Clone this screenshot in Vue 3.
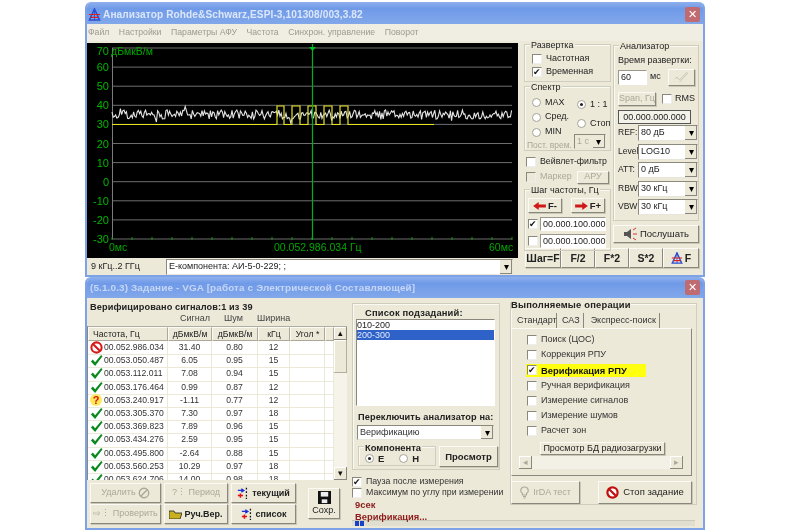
<script setup>
const gridYs = [48, 67.1, 86.2, 105.3, 124.4, 143.5, 162.6, 181.7, 200.8, 219.9, 239]
const labels = ['70', '60', '50', '40', '30', '20', '10', '0', '-10', '-20', '-30']
let seed = 17
const rnd = () => { seed = (seed * 16807) % 2147483647; return seed / 2147483647 }
const pts = []
for (let x = 112; x <= 512; x += 1.2) {
  const spike = rnd() > 0.9 ? (rnd() - 0.5) * 10 : 0
  pts.push(x + ',' + (114.5 + (rnd() - 0.5) * 9 + spike).toFixed(1))
}
const noise = pts.join(' ')
const yellow = '112,124.5 277,124.5 277,106 284,106 284,124.5 292,124.5 292,106 300,106 300,124.5 308,124.5 308,106 316,106 316,124.5 324,124.5 324,106 332,106 332,124.5 340,124.5 340,106 348,106 348,124.5 434,124.5'
const ticks = []
for (let x = 112; x <= 512; x += 20) ticks.push(x)
const rows = [
  ['no', '00.052.986.034', '31.40', '0.80', '12'],
  ['ok', '00.053.050.487', '6.05', '0.95', '15'],
  ['ok', '00.053.112.011', '7.08', '0.94', '15'],
  ['ok', '00.053.176.464', '0.99', '0.87', '12'],
  ['q', '00.053.240.917', '-1.11', '0.77', '12'],
  ['ok', '00.053.305.370', '7.30', '0.97', '18'],
  ['ok', '00.053.369.823', '7.89', '0.96', '15'],
  ['ok', '00.053.434.276', '2.59', '0.95', '15'],
  ['ok', '00.053.495.800', '-2.64', '0.88', '15'],
  ['ok', '00.053.560.253', '10.29', '0.97', '18'],
  ['ok', '00.053.624.706', '14.00', '0.98', '18'],
]
const analyzerSelects = [
  ['REF:', '80 дБ'], ['Level', 'LOG10'], ['ATT:', '0 дБ'], ['RBW:', '30 кГц'], ['VBW:', '30 кГц'],
]
const menu = ['Файл', 'Настройки', 'Параметры АФУ', 'Частота', 'Синхрон. управление', 'Поворот']
const ops = ['Поиск (ЦОС)', 'Коррекция РПУ', 'Верификация РПУ', 'Ручная верификация', 'Измерение сигналов', 'Измерение шумов', 'Расчет зон']
</script>

<template>
  <div class="desk">
    <svg width="0" height="0" class="defs">
      <symbol id="i-ok" viewBox="0 0 14 14"><path d="M1 8 L3 6 L5.5 9 L12 1 L13.5 2.5 L5.5 13 Z" fill="#0a8a1e" /></symbol>
      <symbol id="i-no" viewBox="0 0 14 14"><circle cx="7" cy="7" r="5.5" fill="#fff" stroke="#d81818" stroke-width="2.2" /><path d="M3.2 3.2 L10.8 10.8" stroke="#d81818" stroke-width="2.2" /></symbol>
      <symbol id="i-ant" viewBox="0 0 14 14"><path d="M7 1 L1.5 13 H12.5 Z" fill="none" stroke="#2a4fd0" stroke-width="1.6" /><path d="M7 1 V13" stroke="#2a4fd0" /><path d="M1 7 H13 M3 10 H11" stroke="#e02020" stroke-width="1.3" /></symbol>
      <symbol id="i-left" viewBox="0 0 16 10"><path d="M0 5 L7 0 V3 H16 V7 H7 V10 Z" fill="#d01818" /></symbol>
      <symbol id="i-right" viewBox="0 0 16 10"><path d="M16 5 L9 0 V3 H0 V7 H9 V10 Z" fill="#d01818" /></symbol>
      <symbol id="i-move" viewBox="0 0 14 14"><path d="M1 4 H7 M5 2 L8 4 L5 6" stroke="#1f2fd8" stroke-width="1.6" fill="none" /><path d="M1 10 H7 M4 7.5 V12.5" stroke="#e01010" stroke-width="1.8" /><path d="M11 1 V3 M11 5 V7 M11 9 V11 M11 12.5 V14" stroke="#111" stroke-width="1.5" /></symbol>
    </svg>

    <section class="win">
      <header class="title">
        <svg class="title-icon"><use href="#i-ant" /></svg>
        <span class="title-text">Анализатор Rohde&amp;Schwarz,ESPI-3,101308/003,3.82</span>
        <span class="close">✕</span>
      </header>
      <nav class="menu"><span v-for="m in menu" :key="m">{{ m }}</span></nav>
      <div class="top-body">
        <div class="chart-col">
          <svg class="chart" width="431" height="215" viewBox="87 43 431 215">
            <rect x="87" y="43" width="431" height="215" fill="#000" />
            <line v-for="y in gridYs" :key="y" x1="112" x2="512" :y1="y" :y2="y" stroke="#6e6e6e" />
            <line x1="112.5" x2="112.5" y1="48" y2="239" stroke="#7c7c7c" />
            <line v-for="t in ticks" :key="t" :x1="t" :x2="t" y1="237" y2="240" stroke="#0a9a0a" />
            <polyline :points="noise" fill="none" stroke="#e4e4e4" stroke-width="1.1" />
            <polyline :points="yellow" fill="none" stroke="#e4e420" stroke-width="1.2" />
            <line x1="312.5" x2="312.5" y1="44" y2="240" stroke="#00b020" stroke-width="1.2" />
            <path d="M309 47 H316 L312.5 51 Z" fill="#00c020" />
            <text v-for="(l, i) in labels" :key="l" x="109" :y="gridYs[i] + (i === 0 ? 7 : 4)" text-anchor="end" class="c-label">{{ l }}</text>
            <text x="111" y="55" class="c-unit">дБмкВ/м</text>
            <text x="109" y="251" class="c-unit">0мс</text>
            <text x="274" y="251" class="c-unit">00.052.986.034 Гц</text>
            <text x="489" y="251" class="c-unit">60мс</text>
          </svg>
          <div class="freqbar">
            <span class="band">9 кГц..2 ГГц</span>
            <div class="select freq-sel"><span>E-компонента: АИ-5-0-229; ;</span><i class="drop">▾</i></div>
          </div>
        </div>

        <div class="ctl-col">
          <div class="ctl-cols">
            <div class="col-a">
              <div class="group g-sweep">
                <span class="legend">Развертка</span>
                <label class="opt"><i class="cb" />Частотная</label>
                <label class="opt"><i class="cb on" />Временная</label>
              </div>
              <div class="group g-spec">
                <span class="legend">Спектр</span>
                <div class="spec-l">
                  <label class="opt"><i class="rb" />MAX</label>
                  <label class="opt"><i class="rb" />Сред.</label>
                  <label class="opt"><i class="rb" />MIN</label>
                  <span class="off tiny">Пост. врем.</span>
                </div>
                <div class="spec-r">
                  <label class="opt"><i class="rb on" />1 : 1</label>
                  <label class="opt"><i class="rb" />Стоп</label>
                  <div class="select mini-sel off"><span>1 с</span><i class="drop">▾</i></div>
                </div>
              </div>
              <label class="opt wave"><i class="cb" />Вейвлет-фильтр</label>
              <div class="marker">
                <label class="opt off"><i class="cb dis" />Маркер</label>
                <button class="btn aru off">АРУ</button>
              </div>
              <div class="group g-step">
                <span class="legend">Шаг частоты, Гц</span>
                <div class="step-btns">
                  <button class="btn b-bold step"><svg class="arrow"><use href="#i-left" /></svg>F-</button>
                  <button class="btn b-bold step"><svg class="arrow"><use href="#i-right" /></svg>F+</button>
                </div>
                <div class="step-row"><i class="cb on" /><span class="input">00.000.100.000</span></div>
                <div class="step-row"><i class="cb" /><span class="input">00.000.100.000</span></div>
              </div>
            </div>
            <div class="col-b">
              <div class="group g-an">
                <span class="legend">Анализатор</span>
                <div class="an-time">Время развертки:</div>
                <div class="an-row">
                  <span class="input in-60">60</span><span class="ms">мс</span>
                  <button class="btn ok-btn"><svg width="15" height="13" viewBox="0 0 15 13"><path d="M1 8 L3 6 L5.5 9 L13 1 M5.5 11 L14 2" stroke="#c9c7b6" fill="none" /></svg></button>
                </div>
                <div class="an-row2">
                  <button class="btn span off">Span, Гц</button>
                  <label class="opt"><i class="cb" />RMS</label>
                </div>
                <div class="display">00.000.000.000</div>
                <div v-for="s in analyzerSelects" :key="s[0]" class="an-sel">
                  <span class="an-lab">{{ s[0] }}</span>
                  <div class="select an-box"><span>{{ s[1] }}</span><i class="drop">▾</i></div>
                </div>
              </div>
              <button class="btn listen">
                <svg width="14" height="14" viewBox="0 0 14 14"><path d="M1 5 H4 L8 2 V12 L4 9 H1 Z" fill="#555" /><path d="M10 3 L13 1 M10 7 H14 M10 11 L13 13" stroke="#e03030" /></svg>
                Послушать
              </button>
            </div>
          </div>
          <div class="f-row">
            <button class="btn b-bold fb-1">Шаг=F</button>
            <button class="btn b-bold fb-2">F/2</button>
            <button class="btn b-bold fb-2">F*2</button>
            <button class="btn b-bold fb-2">S*2</button>
            <button class="btn b-bold fb-1"><svg class="ant"><use href="#i-ant" /></svg>F</button>
          </div>
        </div>
      </div>
    </section>

    <section class="win bottom-win">
      <header class="title t2">
        <span class="title-text t2-text">(5.1.0.3) Задание - VGA [работа с Электрической Составляющей]</span>
        <span class="close">✕</span>
      </header>
      <div class="bot-body">
        <div class="left">
          <div class="verified">Верифицировано сигналов:1 из 39</div>
          <div class="units"><span>Сигнал</span><span>Шум</span><span>Ширина</span></div>
          <div class="table-wrap">
            <div class="table">
              <div class="thead">
                <span>Частота, Гц</span><span>дБмкВ/м</span><span>дБмкВ/м</span><span>кГц</span><span>Угол *</span><span />
              </div>
              <div v-for="r in rows" :key="r[1]" class="trow">
                <span class="freq"><i v-if="r[0] === 'q'" class="qmark">?</i><svg v-else class="st"><use :href="'#i-' + r[0]" /></svg>{{ r[1] }}</span>
                <span>{{ r[2] }}</span><span>{{ r[3] }}</span><span>{{ r[4] }}</span><span /><span />
              </div>
            </div>
            <div class="vscroll">
              <i class="sbtn">▴</i><i class="thumb" /><i class="grow" /><i class="sbtn">▾</i>
            </div>
          </div>
          <div class="actions">
            <div class="act-grid">
              <button class="btn off">Удалить <svg width="12" height="12" viewBox="0 0 14 14"><circle cx="7" cy="7" r="5.5" fill="none" stroke="#aca899" stroke-width="1.6" /><path d="M3 11 L11 3" stroke="#aca899" stroke-width="1.6" /></svg></button>
              <button class="btn off">?⋮ Период</button>
              <button class="btn b-bold"><svg class="mv"><use href="#i-move" /></svg>текущий</button>
              <button class="btn off">⇨⋮ Проверить</button>
              <button class="btn b-bold"><svg width="13" height="10" viewBox="0 0 13 10"><path d="M0 2 H5 L6 4 H13 L11 10 H0 Z" fill="#c8b020" stroke="#222" stroke-width=".8" /></svg> Руч.Вер.</button>
              <button class="btn b-bold"><svg class="mv"><use href="#i-move" /></svg>список</button>
            </div>
            <button class="btn save">
              <svg width="13" height="13" viewBox="0 0 14 14"><path d="M0 0 H14 V14 H0 Z" fill="#111" /><rect x="3" y="1" width="8" height="5" fill="#eee" /><rect x="4" y="9" width="6" height="4" fill="#eee" /></svg>
              Сохр.
            </button>
          </div>
        </div>

        <div class="right-area">
          <div class="right-top">
            <div class="mid">
              <div class="group g-list">
                <div class="list-title">Список подзаданий:</div>
                <div class="listbox">
                  <div>010-200</div>
                  <div class="sel">200-300</div>
                </div>
                <div class="switch">Переключить анализатор на:</div>
                <div class="select sw-sel"><span>Верификацию</span><i class="drop">▾</i></div>
                <div class="comp-row">
                  <div class="group g-comp">
                    <span class="legend lb">Компонента</span>
                    <label class="opt b"><i class="rb on" />E</label>
                    <label class="opt b"><i class="rb" />H</label>
                  </div>
                  <button class="btn b-bold view">Просмотр</button>
                </div>
              </div>
              <label class="opt chk"><i class="cb on" />Пауза после измерения</label>
              <label class="opt chk"><i class="cb" />Максимум по углу при измерении</label>
              <div class="red">9сек</div>
              <div class="red">Верификация...</div>
            </div>
            <div class="group g-ops">
              <span class="ops-title">Выполняемые операции</span>
              <div class="tabs">
                <span class="tab active">Стандарт</span><span class="tab">САЗ</span><span class="tab">Экспресс-поиск</span>
              </div>
              <div class="panel">
                <label v-for="(o, i) in ops" :key="o" class="op" :class="{ hl: i === 2 }"><i class="cb" :class="{ on: i === 2 }" />{{ o }}</label>
                <button class="btn db">Просмотр БД радиозагрузки</button>
                <div class="hscroll"><i class="sbtn off">◂</i><i class="grow" /><i class="sbtn off">▸</i></div>
              </div>
              <div class="ops-btns">
                <button class="btn big off">
                  <svg width="9" height="13" viewBox="0 0 9 13"><path d="M4.5 1 A3.5 3.5 0 0 1 6.5 7.5 V9 H2.5 V7.5 A3.5 3.5 0 0 1 4.5 1 Z M3 10.5 H6 M3.5 12 H5.5" fill="none" stroke="#aca899" stroke-width="1.1" /></svg>
                  IrDA тест
                </button>
                <button class="btn big stop">
                  <svg width="13" height="13" viewBox="0 0 14 14"><circle cx="7" cy="7" r="5.5" fill="#fff" stroke="#c01010" stroke-width="2.4" /><path d="M3.2 3.2 L10.8 10.8" stroke="#c01010" stroke-width="2.4" /></svg>
                  Стоп задание
                </button>
              </div>
            </div>
          </div>
          <div class="progress"><i /><i /></div>
        </div>
      </div>
    </section>
  </div>
</template>

<style>
html, body { margin: 0; background: #fff; }
</style>

<style scoped>
.desk { width: 800px; height: 531px; overflow: hidden; padding: 2px 95px 0 85px; box-sizing: border-box; background: #fff; font: 9px/1.1 "Liberation Sans", sans-serif; color: #222; filter: blur(0.4px); }
.defs { position: absolute; }
.win { width: 620px; height: 275px; box-sizing: border-box; background: #ece9d8; border: 2px solid #7ea2e6; border-top: 0; border-radius: 6px 6px 0 0; overflow: hidden; }
.bottom-win { height: 253px; }
.title { height: 22px; margin: 0 -2px; display: flex; align-items: center; padding: 3px 5px 0 3px; box-sizing: border-box; background: linear-gradient(#8fb0ec, #6f9ae8 30%, #82a8ea); }
.t2 { height: 21px; padding-left: 5px; padding-top: 0; }
.title-icon { width: 13px; height: 13px; margin-right: 2px; }
.title-text { flex: 1; font: 700 10.1px "Liberation Sans", sans-serif; color: #dbe6fa; letter-spacing: .1px; white-space: nowrap; }
.t2-text { color: #c6d6f6; font-size: 9.9px; letter-spacing: .15px; }
.close { width: 15px; height: 15px; background: #c06a72; color: #fff; font-size: 11px; line-height: 15px; text-align: center; border-radius: 2px; }
.menu { height: 17px; display: flex; gap: 9.5px; align-items: center; padding-left: 1px; color: #9c9a8e; font-size: 8.7px; background: #f0eee2; }
.top-body { display: flex; }
.chart-col { width: 431px; padding-top: 2px; }
.chart { display: block; }
.c-label { fill: #00b400; font: 11px "Liberation Sans", sans-serif; }
.c-unit { fill: #00a800; font: 10.5px "Liberation Sans", sans-serif; }
.freqbar { display: flex; align-items: center; height: 18px; gap: 14px; padding-left: 4px; }
.band { width: 61px; }
.select { display: flex; align-items: center; justify-content: space-between; box-sizing: border-box; background: #fff; border: 1px solid #8b897c; border-color: #8b897c #e8e6da #e8e6da #8b897c; padding-left: 2px; }
.drop { display: block; width: 12px; height: 100%; background: #ece9d8; box-shadow: inset -1px -1px #8a887c; font: 10px/13px "Liberation Sans"; color: #000; text-align: center; font-style: normal; }
.freq-sel { width: 347px; height: 16px; }
.ctl-col { margin-left: 6px; width: 175px; padding-top: 2px; }
.ctl-cols { display: flex; gap: 2px; height: 202px; }
.col-a { width: 87px; }
.col-b { width: 86px; }
.group { position: relative; border: 1px solid #cfcdbd; box-sizing: border-box; box-shadow: inset 1px 1px #faf9f2; }
.legend { position: absolute; top: -5px; left: 5px; padding: 0 1px; background: #ece9d8; font-size: 9px; line-height: 10px; white-space: nowrap; }
.opt { display: flex; align-items: center; gap: 4px; font-size: 9px; white-space: nowrap; }
.cb { flex: none; display: block; width: 10px; height: 10px; box-sizing: border-box; background: #fff; border: 1px solid #8a887c; border-right-color: #eee; border-bottom-color: #eee; position: relative; }
.cb.dis { background: #ece9d8; }
.cb.on::after { content: "✔"; position: absolute; left: 0; top: -1px; font: 9px/10px "DejaVu Sans"; color: #111; }
.rb { flex: none; display: block; width: 9px; height: 9px; border-radius: 50%; background: #fff; border: 1px solid #a5a396; box-sizing: border-box; position: relative; }
.rb.on::after { content: ""; position: absolute; left: 2px; top: 2px; width: 3px; height: 3px; border-radius: 50%; background: #222; }
.off { color: #aca899; }
.g-sweep { height: 38px; margin-top: 1px; padding: 9px 0 0 7px; display: flex; flex-direction: column; gap: 3px; }
.g-spec { height: 65px; margin-top: 4px; display: flex; padding: 8px 0 0 7px; }
.spec-l { width: 44px; display: flex; flex-direction: column; }
.spec-l .opt { height: 16px; }
.spec-r { display: flex; flex-direction: column; margin-left: 5px; }
.spec-r .opt { height: 19px; gap: 4px; }
.tiny { font-size: 8.5px; margin-left: -5px; margin-top: 1px; white-space: nowrap; }
.mini-sel { width: 32px; height: 15px; background: #ece9d8; color: #aca899; margin-left: -3px; margin-top: 1px; }
.wave { margin: 5px 0 0 2px; height: 12px; font-size: 8.8px; }
.marker { display: flex; justify-content: space-between; align-items: center; margin: 2px 2px 0 2px; height: 14px; }
.btn { display: flex; align-items: center; justify-content: center; gap: 2px; padding: 0; box-sizing: border-box; font: inherit; font-size: 9px; color: #222; background: #ece9d8; border: 1px solid; border-color: #fbfaf4 #8a887c #8a887c #fbfaf4; box-shadow: 1px 1px #c9c7b6; white-space: nowrap; }
.btn.off { color: #aca899; }
.b-bold { font: 700 9.5px "Liberation Sans", sans-serif; }
.aru { width: 32px; height: 13px; }
.g-step { height: 62px; margin-top: 5px; padding-top: 8px; }
.step-btns { display: flex; gap: 9px; padding-left: 3px; }
.step { width: 34px; height: 15px; }
.arrow { width: 13px; height: 8px; }
.step-row { display: flex; align-items: center; gap: 2px; margin-top: 4px; padding-left: 3px; height: 13px; }
.input { display: block; box-sizing: border-box; background: #fff; padding-left: 2px; border: 1px solid #ece9d8; border-color: #9a988a #fff #fff #9a988a; line-height: 12px; height: 14px; width: 66px; font-size: 9px; white-space: nowrap; }
.g-an { height: 176px; margin-top: 2px; padding: 10px 0 0 4px; }
.an-time { font-size: 9px; white-space: nowrap; }
.an-row { display: flex; align-items: center; margin-top: 3px; height: 17px; }
.in-60 { width: 29px; height: 15px; }
.ms { margin-left: 3px; width: 18px; }
.ok-btn { width: 27px; height: 17px; }
.an-row2 { display: flex; align-items: center; gap: 6px; margin-top: 6px; height: 14px; }
.span { width: 38px; height: 14px; }
.an-row2 .opt { gap: 3px; }
.display { width: 73px; height: 14px; margin-top: 4px; box-sizing: border-box; border: 1px solid #555; background: #f4f3ea; line-height: 12px; text-align: center; font-size: 9px; }
.an-sel { display: flex; align-items: center; height: 18.5px; }
.an-sel:first-of-type { margin-top: 4px; }
.an-lab { width: 20px; flex: none; font-size: 8.5px; }
.an-box { width: 60px; height: 16px; font-size: 9px; }
.listen { width: 86px; height: 18px; margin-top: 4px; gap: 3px; font-size: 9.5px; }
.f-row { display: flex; margin-top: 3px; margin-left: 1px; height: 20px; }
.f-row .b-bold { font-size: 10.5px; }
.fb-1 { width: 36px; flex: none; }
.fb-2 { width: 34px; flex: none; }
.ant { width: 12px; height: 12px; }

.bot-body { display: flex; height: 230px; }
.left { width: 260px; }
.verified { margin: 4px 0 0 3px; font: 700 9.2px/11px "Liberation Sans", sans-serif; letter-spacing: .1px; white-space: nowrap; }
.units { display: flex; margin: 1px 0 0 93px; gap: 14px; color: #444; height: 11px; font-size: 9px; }
.table-wrap { display: flex; width: 260px; height: 154px; margin-top: 1px; border-left: 1px solid #8a887c; box-sizing: border-box; border-top: 1px solid #b0ae9f; overflow: hidden; }
.table { flex: 1; background: #fff; overflow: hidden; }
.thead, .trow { display: grid; grid-template-columns: 80px 44px 46px 32px 35px 9px; text-align: center; }
.thead { height: 14px; line-height: 12px; background: #ece9d8; font-size: 8.7px; }
.thead span { border: 1px solid; border-color: #fbfaf4 #aca899 #aca899 #fbfaf4; box-sizing: border-box; }
.thead span:first-child { text-align: left; padding-left: 4px; }
.trow { height: 13.2px; line-height: 13.2px; font-size: 8.6px; color: #333; }
.trow span { border-right: 1px solid #ece9d8; border-bottom: 1px solid #ece9d8; box-sizing: border-box; white-space: nowrap; }
.freq { display: flex; align-items: center; text-align: left; gap: 1px; }
.st { width: 13px; height: 13px; flex: none; margin-left: 2px; }
.qmark { flex: none; display: block; width: 12px; height: 12px; margin: 0 1px 0 2px; border-radius: 50%; background: #ffe95a; color: #d81010; font: 700 11px/12px "Liberation Sans", sans-serif; text-align: center; }
.vscroll { width: 13px; display: flex; flex-direction: column; background: #f5f3ea; }
.sbtn { display: block; height: 13px; background: #ece9d8; box-shadow: inset -1px -1px #8a887c, inset 1px 1px #fff; font: 9px/13px "Liberation Sans"; text-align: center; color: #111; font-style: normal; flex: none; }
.sbtn.off { color: #aca899; width: 13px; }
.thumb { display: block; height: 33px; background: #ece9d8; box-shadow: inset -1px -1px #b0ae9f, inset 1px 1px #fff; }
.grow { display: block; flex: 1; }
.actions { display: flex; align-items: center; padding: 3px 0 0 3px; }
.act-grid { display: grid; grid-template-columns: 71px 64px 65px; grid-auto-rows: 20px; gap: 1px 3px; }
.act-grid .b-bold { font-size: 9px; }
.mv { width: 12px; height: 12px; margin-right: 1px; }
.save { width: 32px; height: 31px; margin-left: 12px; flex-direction: column; font-size: 9px; }

.right-area { margin-left: 5px; width: 347px; }
.right-top { display: flex; gap: 10px; height: 222px; }
.mid { width: 148px; }
.g-list { height: 167px; margin-top: 5px; padding: 3px 0 0 3px; }
.list-title { margin-left: 9px; font: 700 9.4px/11px "Liberation Sans", sans-serif; letter-spacing: .15px; }
.listbox { width: 139px; height: 87px; margin-top: 1px; box-sizing: border-box; background: #fff; border: 1px solid; border-color: #8a887c #fff #fff #8a887c; font-size: 9px; line-height: 10px; }
.sel { background: #2f62c8; color: #dfe8fa; }
.switch { margin: 6px 0 0 2px; font: 700 9.2px/11px "Liberation Sans", sans-serif; letter-spacing: .1px; white-space: nowrap; }
.sw-sel { width: 137px; height: 15px; margin: 2px 0 0 1px; color: #333; font-size: 9px; }
.comp-row { display: flex; margin: 6px 0 0 2px; gap: 3px; }
.g-comp { width: 78px; height: 20px; display: flex; gap: 15px; padding: 4px 0 0 6px; }
.lb { font: 700 9.4px/10px "Liberation Sans", sans-serif; left: 5px; top: -4px; }
.opt.b { font: 700 9.5px "Liberation Sans", sans-serif; gap: 4px; }
.view { width: 59px; height: 21px; font-size: 9.5px; }
.chk { height: 11px; margin-top: 0; gap: 4px; white-space: nowrap; font-size: 8.8px; color: #333; }
.chk:first-of-type { margin-top: 6px; }
.red { margin: 1px 0 0 3px; font: 700 9.4px/11px "Liberation Sans", sans-serif; color: #8c1c1c; height: 11px; }
.g-ops { width: 187px; height: 202px; margin-top: 5px; padding-top: 9px; box-sizing: border-box; }
.ops-title { position: absolute; left: 0; top: -4px; background: #ece9d8; font: 700 9.4px/10px "Liberation Sans", sans-serif; letter-spacing: .2px; white-space: nowrap; }
.tabs { display: flex; height: 15px; padding-left: 3px; align-items: stretch; }
.tab { display: flex; align-items: center; padding: 0 3px; margin-right: 2px; font-size: 9px; border-right: 1px solid #8a887c; color: #333; white-space: nowrap; }
.tab.active { width: 36px; background: #ece9d8; }
.tab:nth-child(3) { margin-left: 2px; }
.panel { width: 181px; height: 148px; box-sizing: border-box; border: 1px solid; border-color: #fbfaf4 #8a887c #8a887c #fbfaf4; padding: 3px 0 0 15px; }
.op { display: flex; align-items: center; gap: 4px; height: 15.3px; font-size: 9px; color: #333; white-space: nowrap; }
.op.hl { width: 120px; height: 13px; margin: 1.15px 0 1.15px -1px; padding-left: 1px; box-sizing: border-box; background: #ffff10; font: 700 9.4px "Liberation Sans", sans-serif; color: #111; }
.db { width: 125px; height: 13px; margin: 3px 0 0 13px; font-size: 9px; }
.hscroll { display: flex; width: 164px; height: 13px; margin: 1px 0 0 -8px; background: #f3f1e6; }
.ops-btns { display: flex; gap: 18px; margin-top: 5px; }
.big { width: 69px; height: 23px; gap: 4px; }
.stop { width: 94px; gap: 4px; font-size: 9.5px; }
.progress { display: flex; gap: 1px; height: 6px; padding-left: 3px; background: #e0decf; border-top: 1px solid #c9c7b6; box-sizing: border-box; width: 343px; }
.progress i { display: block; width: 4px; background: #1a40c8; }
</style>
